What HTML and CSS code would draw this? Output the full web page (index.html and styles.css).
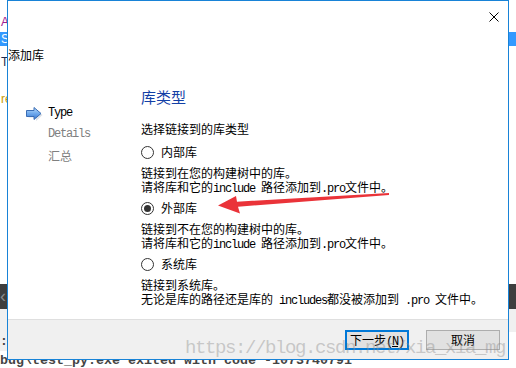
FILE: index.html
```html
<!DOCTYPE html>
<html>
<head>
<meta charset="utf-8">
<link rel="stylesheet" href="styles.css">
</head>
<body>
<div class="desk">
  <div class="ide-top">
    <div class="ln ln-a">Ap</div>
    <div class="ln ln-s">Sr</div>
    <div class="ln ln-t">Te</div>
    <div class="ln ln-r">re</div>
  </div>
  <div class="ide-band">&lsaquo;</div>
  <div class="ide-pane"><span class="colon">:</span><span class="pane-gap"></span></div>
  <div class="ide-out">bug\test_py.exe exited with code -1073740791</div>
</div>

<div class="dialog">
  <div class="titlebar">
    <svg class="close" width="10" height="10" viewBox="0 0 10 10"><path d="M0.5 0.5 L9.5 9.5 M9.5 0.5 L0.5 9.5" stroke="#000" stroke-width="1" fill="none"/></svg>
  </div>
  <div class="subtitle">添加库</div>
  <div class="main">
    <div class="sidebar">
      <div class="step current">
        <span class="step-icon">
          <svg width="17" height="14" viewBox="0 0 17 14">
            <defs>
              <linearGradient id="ag" x1="0" y1="0" x2="0" y2="1">
                <stop offset="0" stop-color="#b9dcfb"/>
                <stop offset="0.5" stop-color="#6fa9ec"/>
                <stop offset="1" stop-color="#3a78d2"/>
              </linearGradient>
            </defs>
            <path d="M1.5 4.5 H9 V1 L15.5 7 L9 13 V9.5 H1.5 Z" fill="#9aa9bb" opacity="0.35" transform="translate(1 1)"/>
            <path d="M0.5 3.5 H8 V0.5 L15 6.5 L8 12.5 V9.5 H0.5 Z" fill="url(#ag)" stroke="#3a6db4" stroke-width="1"/>
          </svg>
        </span>
        <span class="lat">Type</span>
      </div>
      <div class="step"><span class="step-icon"></span><span class="lat">Details</span></div>
      <div class="step"><span class="step-icon"></span><span>汇总</span></div>
    </div>
    <div class="content">
      <div class="heading">库类型</div>
      <div class="prompt">选择链接到的库类型</div>

      <div class="radio-row first"><span class="radio"></span><span>内部库</span></div>
      <div class="desc">
        <div>链接到在您的构建树中的库。</div>
        <div>请将库和它的<span class="lat">include </span>路径添加到<span class="lat">.pro</span>文件中。</div>
      </div>

      <div class="radio-row"><span class="radio checked"></span><span>外部库</span></div>
      <div class="desc">
        <div>链接到不在您的构建树中的库。</div>
        <div>请将库和它的<span class="lat">include </span>路径添加到<span class="lat">.pro</span>文件中。</div>
      </div>

      <div class="radio-row"><span class="radio"></span><span>系统库</span></div>
      <div class="desc">
        <div>链接到系统库。</div>
        <div>无论是库的路径还是库的<span class="lat"> includes</span>都没被添加到<span class="lat"> .pro </span>文件中。</div>
      </div>
    </div>
  </div>
  <div class="footer">
    <button class="btn default">下一步<span class="lat">(<u>N</u>)</span></button>
    <button class="btn">取消</button>
  </div>
</div>

<div class="watermark">https://blog.csdn.net/xia_xia_mg</div>

<svg class="annot" width="516" height="368" viewBox="0 0 516 368">
  <polygon points="389,193 389,195 238,206.7 240,213.5 218,205.5 236,196 237,201.7" fill="#ea3339"/>
</svg>
</body>
</html>
```

FILE: styles.css
```css
html, body {
  margin: 0;
  padding: 0;
  width: 516px;
  height: 368px;
  overflow: hidden;
  background: #fff;
  position: relative;
}

.desk {
  display: flex;
  flex-direction: column;
  height: 368px;
  font-family: "Noto Sans CJK SC", sans-serif;
}

.ide-top {
  height: 289px;
  padding-top: 15px;
  box-sizing: border-box;
  background: #fff;
}

.ln {
  font-family: "Liberation Sans", sans-serif;
  font-size: 12px;
  line-height: 14px;
  padding-left: 1px;
}

.ln-a { color: #a0208f; }
.ln-s { margin-top: 3px; background: #3399ff; color: #fff; }
.ln-t { margin-top: 9px; color: #1a2a50; }
.ln-r { margin-top: 23px; color: #c89a00; }

.ide-band {
  height: 26px;
  background: #3e3e3e;
  color: #8a8a8a;
  font-family: "Liberation Sans", sans-serif;
  font-size: 18px;
  line-height: 24px;
  padding-left: 0;
}

.ide-pane {
  height: 42px;
  background: #f0f0f0;
  position: relative;
  display: flex;
  justify-content: space-between;
}

.colon {
  font-family: "Liberation Mono", monospace;
  font-size: 13px;
  font-weight: bold;
  color: #444;
  line-height: 14px;
  margin-top: 26px;
  margin-left: 0;
}

.pane-gap {
  width: 8px;
  height: 19px;
  margin-top: 23px;
  background: #fff;
}

.ide-out {
  flex: 1;
  padding-top: 2px;
  font-family: "Liberation Mono", monospace;
  font-size: 13.33px;
  font-weight: bold;
  line-height: 15px;
  color: #444;
  white-space: nowrap;
}

.dialog {
  position: absolute;
  left: 7px;
  top: 0;
  width: 502px;
  height: 360px;
  box-sizing: border-box;
  border: 1px solid #1883d7;
  background: #fff;
  display: flex;
  flex-direction: column;
  font-family: "Noto Sans CJK SC", sans-serif;
  font-size: 12px;
  color: #000;
}

.lat {
  font-family: "Liberation Mono", monospace;
  letter-spacing: -1.2px;
}

.titlebar {
  height: 29px;
  display: flex;
  justify-content: flex-end;
  align-items: center;
  padding-right: 9px;
  padding-top: 1px;
}

.subtitle {
  margin-top: 16px;
  line-height: 16px;
  height: 16px;
}

.main {
  flex: 1;
  display: flex;
}

.sidebar {
  width: 133px;
  box-sizing: border-box;
  padding-top: 40px;
  padding-left: 18px;
  flex-shrink: 0;
}

.step {
  display: flex;
  align-items: center;
  height: 21px;
  line-height: 21px;
  color: #808080;
}

.step.current { color: #000; }

.step-icon {
  width: 22px;
  height: 14px;
  display: flex;
  align-items: center;
}

.content {
  padding-top: 24px;
}

.heading {
  font-size: 15px;
  line-height: 20px;
  color: #1340a6;
}

.prompt {
  margin-top: 15px;
  line-height: 14px;
}

.radio-row {
  display: flex;
  align-items: center;
  gap: 7px;
  height: 14px;
  line-height: 14px;
  margin-top: 5px;
}

.radio-row.first { margin-top: 9px; }

.radio {
  width: 13px;
  height: 13px;
  box-sizing: border-box;
  border: 1px solid #333;
  border-radius: 50%;
  background: #fff;
  display: flex;
  align-items: center;
  justify-content: center;
}

.radio.checked::after {
  content: "";
  width: 7px;
  height: 7px;
  border-radius: 50%;
  background: #333;
}

.desc {
  margin-top: 7px;
  line-height: 14px;
  white-space: nowrap;
}

.footer {
  height: 40px;
  box-sizing: border-box;
  border-top: 1px solid #dfdfdf;
  background: #f0f0f0;
  display: flex;
  justify-content: flex-end;
  align-items: flex-start;
  padding-top: 10px;
  padding-right: 8px;
  gap: 17px;
}

.btn {
  height: 20px;
  box-sizing: border-box;
  border: 1px solid #adadad;
  background: #e1e1e1;
  font-family: "Noto Sans CJK SC", sans-serif;
  font-size: 12px;
  line-height: 16px;
  color: #000;
  padding: 0;
  margin: 0;
  width: 74px;
}

.btn.default {
  border: 2px solid #0078d7;
  width: 64px;
}

.btn u { text-decoration: underline; }

.watermark {
  position: absolute;
  left: 185px;
  top: 339px;
  font-family: "Liberation Mono", monospace;
  font-size: 19px;
  letter-spacing: -1.4px;
  line-height: 19px;
  color: rgba(140, 140, 140, 0.42);
  white-space: nowrap;
  pointer-events: none;
}

.annot {
  position: absolute;
  left: 0;
  top: 0;
  pointer-events: none;
}
```
